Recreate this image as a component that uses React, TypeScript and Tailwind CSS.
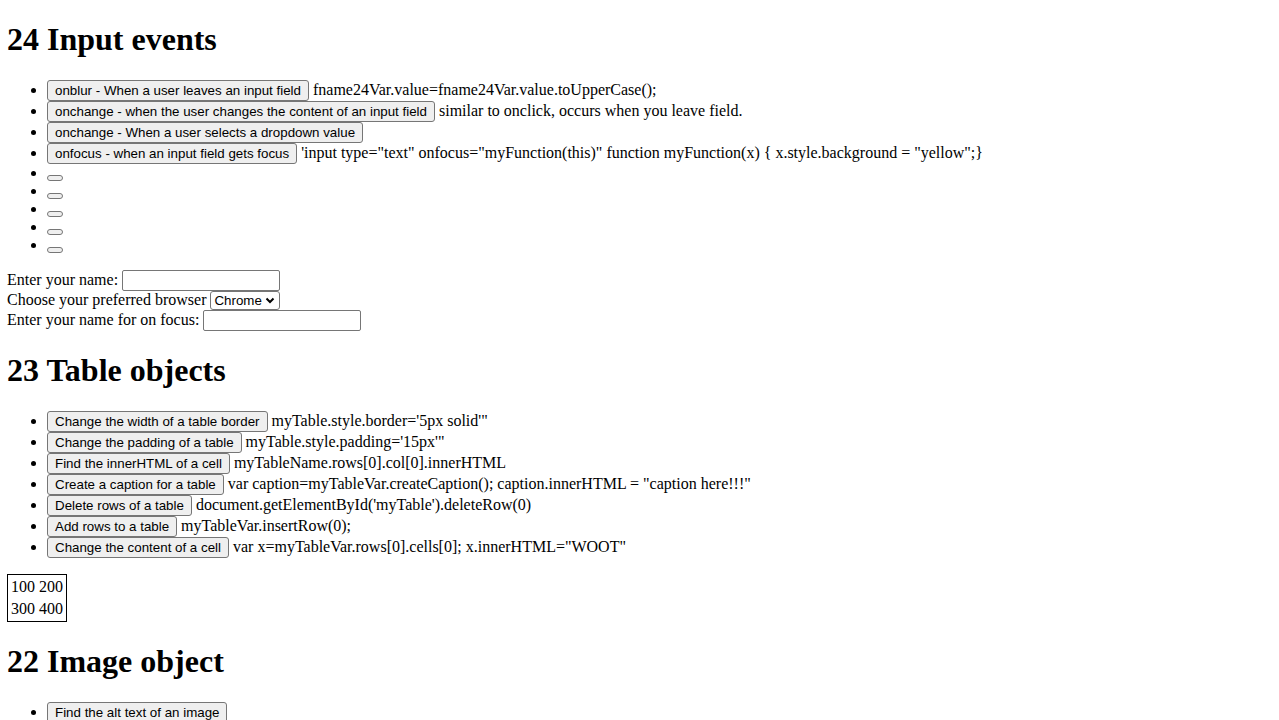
import React from "react";

// ボタン + 説明文の1行分
type Item = { label: string; note?: string };

const inputEvents: Item[] = [
  { label: "onblur - When a user leaves an input field", note: "fname24Var.value=fname24Var.value.toUpperCase();" },
  { label: "onchange - when the user changes the content of an input field", note: "similar to onclick, occurs when you leave field." },
  { label: "onchange - When a user selects a dropdown value" },
  {
    label: "onfocus - when an input field gets focus",
    note: `'input type="text" onfocus="myFunction(this)" function myFunction(x) { x.style.background = "yellow";}`,
  },
  { label: "" },
  { label: "" },
  { label: "" },
  { label: "" },
  { label: "" },
];

const tableObjects: Item[] = [
  { label: "Change the width of a table border", note: "myTable.style.border='5px solid'\"" },
  { label: "Change the padding of a table", note: "myTable.style.padding='15px'\"" },
  { label: "Find the innerHTML of a cell", note: "myTableName.rows[0].col[0].innerHTML" },
  { label: "Create a caption for a table", note: 'var caption=myTableVar.createCaption(); caption.innerHTML = "caption here!!!"' },
  { label: "Delete rows of a table", note: "document.getElementById('myTable').deleteRow(0)" },
  { label: "Add rows to a table", note: "myTableVar.insertRow(0);" },
  { label: "Change the content of a cell", note: 'var x=myTableVar.rows[0].cells[0]; x.innerHTML="WOOT"' },
];

const imageObject: Item[] = [{ label: "Find the alt text of an image" }];

function Btn({ children }: { children?: React.ReactNode }) {
  return (
    <button
      type="button"
      className="inline-block cursor-default rounded-[3px] border border-[#767676] bg-[#efefef] px-[7px] py-[2px] align-baseline font-['Liberation_Sans',Arial,sans-serif] text-[13.3333px] leading-[normal] text-black"
    >
      {children}
    </button>
  );
}

function TextBox() {
  return (
    <input
      type="text"
      className="inline-block h-[21px] w-[158px] rounded-[2px] border border-[#767676] bg-white px-[3px] py-[2px] align-baseline font-['Liberation_Sans',Arial,sans-serif] text-[13.3333px] leading-[normal]"
    />
  );
}

function FakeSelect() {
  return (
    <span className="inline-flex h-[19px] w-[70px] items-center justify-between rounded-[3px] border border-[#767676] bg-white pl-[3px] pr-[4px] align-baseline font-['Liberation_Sans',Arial,sans-serif] text-[13.3333px] leading-[normal] text-black">
      <span>Chrome</span>
      <svg width="10" height="7" viewBox="0 0 10 7" className="mt-[1px]">
        <polyline points="1.5,1.5 5,5 8.5,1.5" fill="none" stroke="black" strokeWidth="2" />
      </svg>
    </span>
  );
}

function ItemList({ items }: { items: Item[] }) {
  return (
    <ul className="my-4 list-disc pl-10">
      {items.map((it, i) => (
        <li key={i}>
          <Btn>{it.label}</Btn>
          {it.note ? " " + it.note : null}
        </li>
      ))}
    </ul>
  );
}

function H1({ children }: { children: React.ReactNode }) {
  return <h1 className="my-[21.44px] text-[32px] font-bold leading-[normal]">{children}</h1>;
}

export default function App() {
  return (
    <div className="min-h-screen bg-white px-[7px] font-['Liberation_Serif','Times_New_Roman',serif] text-[16px] leading-[normal] text-black">
      <H1>24 Input events</H1>
      <ItemList items={inputEvents} />

      <div>
        Enter your name: <TextBox />
        <br />
        Choose your preferred browser <FakeSelect />
        <br />
        Enter your name for on focus: <TextBox />
      </div>

      <H1>23 Table objects</H1>
      <ItemList items={tableObjects} />

      <table className="border-separate border-spacing-[2px] border border-black">
        <tbody>
          <tr>
            <td className="p-px">100</td>
            <td className="p-px">200</td>
          </tr>
          <tr>
            <td className="p-px">300</td>
            <td className="p-px">400</td>
          </tr>
        </tbody>
      </table>

      <H1>22 Image object</H1>
      <ItemList items={imageObject} />
    </div>
  );
}
